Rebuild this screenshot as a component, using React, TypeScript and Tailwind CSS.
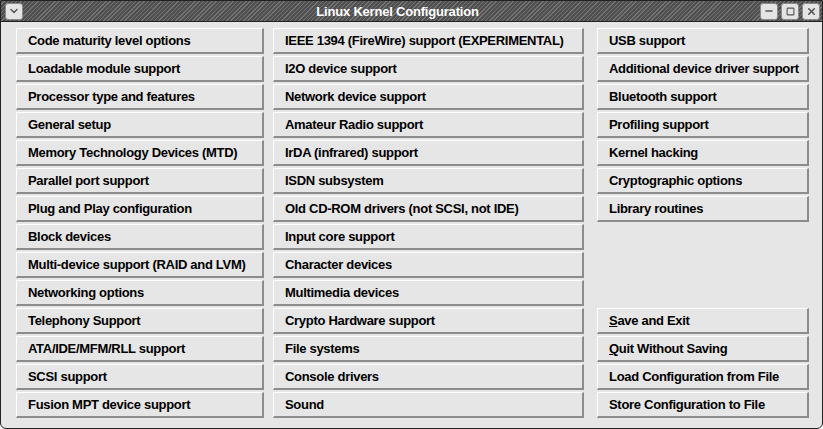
import { ChevronDown, Minus, Square, X } from "lucide-react";

const col1 = [
  "Code maturity level options",
  "Loadable module support",
  "Processor type and features",
  "General setup",
  "Memory Technology Devices (MTD)",
  "Parallel port support",
  "Plug and Play configuration",
  "Block devices",
  "Multi-device support (RAID and LVM)",
  "Networking options",
  "Telephony Support",
  "ATA/IDE/MFM/RLL support",
  "SCSI support",
  "Fusion MPT device support",
];

const col2 = [
  "IEEE 1394 (FireWire) support (EXPERIMENTAL)",
  "I2O device support",
  "Network device support",
  "Amateur Radio support",
  "IrDA (infrared) support",
  "ISDN subsystem",
  "Old CD-ROM drivers (not SCSI, not IDE)",
  "Input core support",
  "Character devices",
  "Multimedia devices",
  "Crypto Hardware support",
  "File systems",
  "Console drivers",
  "Sound",
];

const col3 = [
  "USB support",
  "Additional device driver support",
  "Bluetooth support",
  "Profiling support",
  "Kernel hacking",
  "Cryptographic options",
  "Library routines",
];

function Btn({ children }: { children: React.ReactNode }) {
  return (
    <button className="h-[26px] w-full flex items-center pl-[11px] text-left whitespace-nowrap bg-[#e6e6e6] border-t border-l border-t-white border-l-white border-b-2 border-r-2 border-b-[#8c8c8c] border-r-[#8c8c8c] text-[13px] tracking-[-0.3px] font-bold text-black leading-none">
      {children}
    </button>
  );
}

function TitleButton({ children }: { children: React.ReactNode }) {
  return (
    <div className="w-[18px] h-[17px] rounded-[3px] bg-[#e4e4e4] border border-[#8a8a8a] flex items-center justify-center text-[#555]">
      {children}
    </div>
  );
}

export default function App() {
  return (
    <div
      className="w-[823px] h-[429px] bg-[#e6e6e6] border border-[#222] rounded-b-[6px] flex flex-col overflow-hidden"
      style={{ fontFamily: '"Liberation Sans", Arial, sans-serif' }}
    >
      <div className="h-[21px] border-b border-[#222] flex items-center pl-[4px] pr-[2px] gap-[3px] bg-[repeating-linear-gradient(135deg,#505050_0px,#505050_2px,#727272_2px,#727272_3px)]">
        <TitleButton>
          <ChevronDown size={12} strokeWidth={3} />
        </TitleButton>
        <div className="flex-1 pl-[12px] text-center text-white font-bold text-[13px] tracking-[-0.2px] leading-none">
          Linux Kernel Configuration
        </div>
        <TitleButton>
          <Minus size={10} strokeWidth={4} />
        </TitleButton>
        <TitleButton>
          <Square size={9} strokeWidth={3} />
        </TitleButton>
        <TitleButton>
          <X size={11} strokeWidth={3.5} />
        </TitleButton>
      </div>
      <div className="flex pt-[6px] pl-[15px]">
        <div className="w-[248px] flex flex-col gap-[2px]">
          {col1.map((t) => (
            <Btn key={t}>{t}</Btn>
          ))}
        </div>
        <div className="w-[311px] ml-[9px] flex flex-col gap-[2px]">
          {col2.map((t) => (
            <Btn key={t}>{t}</Btn>
          ))}
        </div>
        <div className="w-[212px] ml-[13px] flex flex-col gap-[2px]">
          {col3.map((t) => (
            <Btn key={t}>{t}</Btn>
          ))}
          <div className="mt-auto flex flex-col gap-[2px]">
            <Btn>
              <span className="underline">S</span>ave and Exit
            </Btn>
            <Btn>
              <span className="underline">Q</span>uit Without Saving
            </Btn>
            <Btn>Load Configuration from File</Btn>
            <Btn>Store Configuration to File</Btn>
          </div>
        </div>
      </div>
    </div>
  );
}
